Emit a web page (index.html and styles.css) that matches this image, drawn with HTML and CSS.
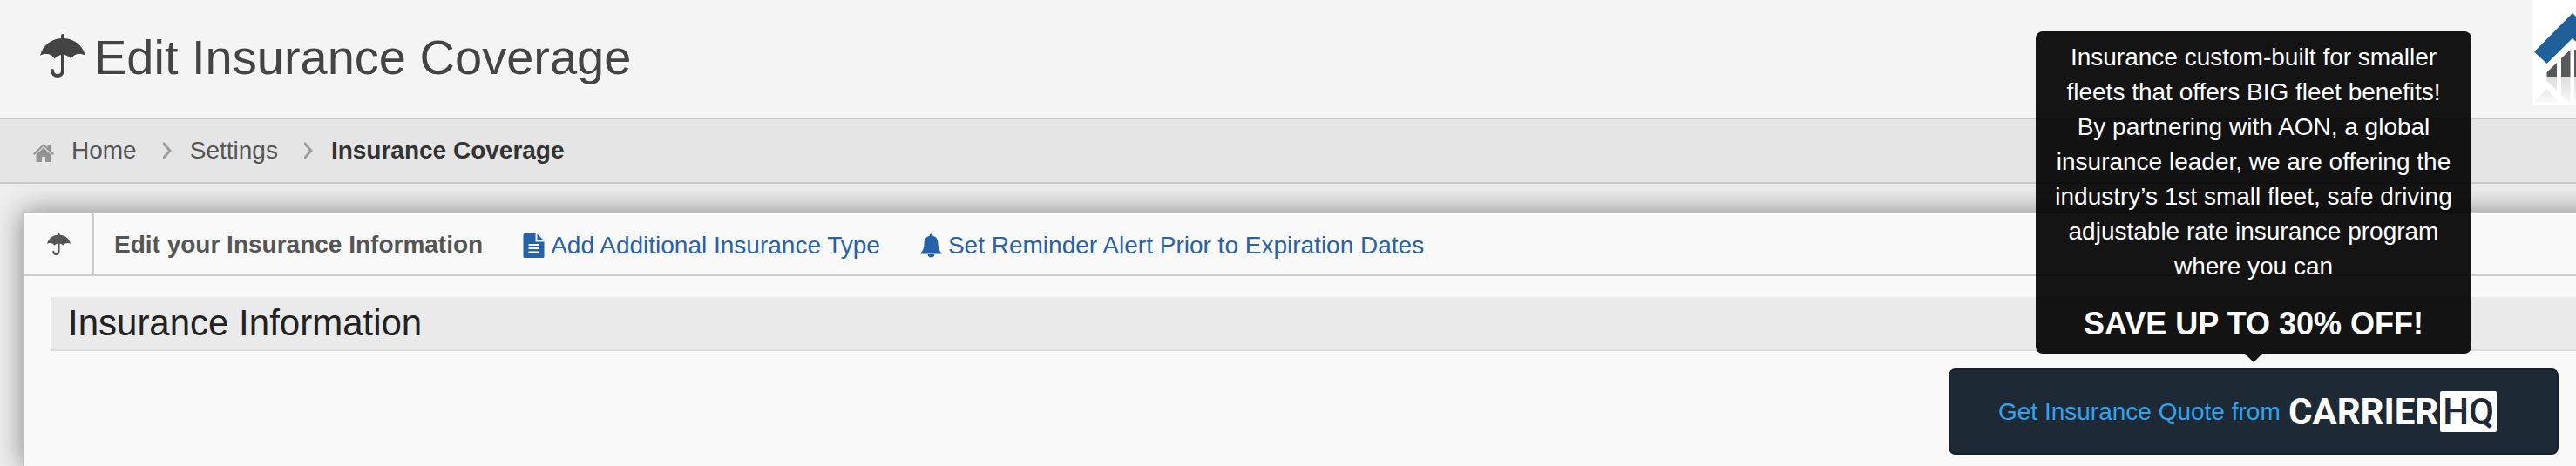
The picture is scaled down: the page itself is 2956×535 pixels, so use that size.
FILE: index.html
```html
<!DOCTYPE html>
<html lang="en">
  <head>
    <title>Edit Insurance Coverage</title>
    <meta charset="utf-8">
    <link rel="stylesheet" href="styles.css">
  </head>
  <body>

  <svg class="sprite" aria-hidden="true">
    <symbol id="umbrella" viewBox="0 0 52 50">
      <path d="M24 7V2a2 2 0 0 1 4 0v5z"/>
      <path d="M0 25C3 12 14 5 26 5s23 7 26 20c-2-1.500-4.500-2-7-2-4 0-7.500 2-9.800 5.500C33 25.500 30 24 26 24s-7 1.500-9.200 4.500C14.500 25 11 23 7 23c-2.500 0-5 .500-7 2z"/>
      <path d="M26 24v18c0 8-12 8-12 0" fill="none" stroke="currentColor" stroke-width="4" stroke-linecap="round"/>
    </symbol>
  </svg>

  <div id="content-header">
    <h1><svg class="icon-title" viewBox="0 0 52 50"><use href="#umbrella"/></svg>Edit Insurance Coverage</h1>
    <svg class="logo" viewBox="0 0 50 120" role="img" aria-label="Company logo">
      <defs>
        <linearGradient id="fade" x1="0" y1="0" x2="0" y2="1">
          <stop offset="0" stop-color="#dcdcdc"/>
          <stop offset="1" stop-color="#fbfbfb"/>
        </linearGradient>
      </defs>
      <rect width="50" height="120" fill="#fff"/>
      <path fill="#1f6099" d="M2 59.500L46 15l4 4v29l-4-4-29.500 29z"/>
      <path fill="#58585a" d="M16.500 83L28 72v16H16.500zM33 67l10.500-10v31H33zM48 57h2v31h-2z"/>
      <path fill="url(#fade)" d="M16.500 88H28v16l-11.500-11zM33 88h10.500v32L33 109zM48 88h2v32h-2zM2 117l14.500-15L31 118z"/>
    </svg>
  </div>

  <div id="breadcrumb">
    <a href="#"><svg class="icon-home" viewBox="0 0 24 21"><path d="M12 0l4.500 4.300V1H20v6.600l4 3.800-1.400 1.500L12 2.800 1.400 12.900 0 11.400z"/><path d="M12 4.600l8.500 8V21H14v-6h-4v6H3.500v-8.400z"/></svg>Home</a>
    <svg class="arrow" viewBox="0 0 10 20"><path d="M0 1l8 9-8 9"/></svg>
    <a href="#">Settings</a>
    <svg class="arrow" viewBox="0 0 10 20"><path d="M0 1l8 9-8 9"/></svg>
    <a href="#" class="current">Insurance Coverage</a>
  </div>

  <div id="content">
    <div class="widget-box">
      <div class="widget-title">
        <span class="icon"><svg class="icon-small" viewBox="0 0 52 50"><use href="#umbrella"/></svg></span>
        <h5>Edit your Insurance Information</h5>
        <a href="#"><svg class="icon-link" viewBox="0 0 24 28"><path fill-rule="evenodd" d="M2 0h12v9.500h10V26.500a1.500 1.500 0 0 1-1.500 1.500h-21A1.500 1.500 0 0 1 0 26.500v-25A1.500 1.500 0 0 1 1.500 0zM6 12v2h12v-2zM6 16v2h12v-2zM6 20.500v2h12v-2z"/><path d="M16 .500L23.500 8H16z"/></svg>Add Additional Insurance Type</a>
        <a href="#"><svg class="icon-link" viewBox="0 0 26 28"><path d="M13 0c1.200 0 2 .800 2 2.200 4 .800 6 4 6.200 8 .300 6.500 1.300 9.800 4.800 13.800H0c3.500-4 4.500-7.300 4.800-13.800.200-4 2.200-7.200 6.200-8C11 .800 11.800 0 13 0z"/><path d="M9 24.500h8a4 3.500 0 0 1-8 0z"/></svg>Set Reminder Alert Prior to Expiration Dates</a>
      </div>
      <div class="widget-content">
        <h3>Insurance Information</h3>
        <div class="quote">
          <a href="#" class="btn-quote">
            <span>Get Insurance Quote from</span>
            <span class="carrier">CARRIER<b>HQ</b></span>
          </a>
          <div class="tooltip" role="tooltip">
            Insurance custom-built for smaller fleets that offers BIG fleet benefits! By partnering with AON, a global insurance leader, we are offering the industry’s 1st small fleet, safe driving adjustable rate insurance program where you can
            <strong>SAVE UP TO 30% OFF!</strong>
          </div>
        </div>
      </div>
    </div>
  </div>

  </body>
</html>
```
FILE: styles.css
```css
* {
  box-sizing: border-box;
}
body {
  margin: 0;
  min-height: 100vh;
  display: flex;
  flex-direction: column;
  overflow-x: hidden;
  background: #eee;
  color: #555;
  font: 28px/40px "Liberation Sans", Arial, sans-serif;
}
h1, h3, h5 {
  margin: 0;
}
a {
  color: #2762a9;
  text-decoration: none;
}
svg {
  fill: currentColor;
  flex: none;
}
.sprite {
  position: absolute;
  width: 0;
  height: 0;
}

#content-header {
  display: flex;
  justify-content: space-between;
  align-items: flex-start;
  background: #f4f4f4;
  border-bottom: 2px solid #c9c9c9;
}
#content-header h1 {
  display: flex;
  align-items: center;
  gap: 10px;
  padding: 36px 0 39px 46px;
  color: #444;
  font-size: 56px;
  font-weight: normal;
  line-height: 60px;
  text-shadow: 0 2px 0 #fff;
}
.icon-title {
  width: 52px;
  height: 50px;
  margin-bottom: 4px;
  filter: drop-shadow(0 2px 0 #fff);
}
.logo {
  width: 50px;
  height: 120px;
}

#breadcrumb {
  display: flex;
  align-items: center;
  padding: 16px 38px;
  background: #e5e5e5;
  border-bottom: 2px solid #c9c9c9;
}
#breadcrumb a {
  display: flex;
  align-items: center;
  color: #555;
}
#breadcrumb .current {
  color: #333;
  font-weight: bold;
}
.icon-home {
  width: 24px;
  height: 21px;
  margin: 4px 20px 0 0;
  color: #939393;
}
.arrow {
  width: 10px;
  height: 20px;
  margin: 0 21px 0 30px;
  fill: none;
  stroke: #9c9c9c;
  stroke-width: 3;
}

#content {
  flex: 1;
  display: flex;
  padding: 32px 0 0 26px;
}
/* runs past the right edge so the shadow shows only along the top and left */
.widget-box {
  flex: 1;
  margin-right: -40px;
  padding-right: 40px;
  background: #f9f9f9;
  border: 2px solid #bfbfbf;
  border-width: 2px 0 0 2px;
  box-shadow: 0 0 30px rgba(0,0,0,0.45);
}
.widget-title {
  display: flex;
  align-items: center;
  height: 72px;
  margin-right: -40px;
  border-bottom: 2px solid #cdcdcd;
  box-shadow: inset 0 2px 0 #fff;
}
.widget-title .icon {
  display: flex;
  align-self: stretch;
  align-items: center;
  justify-content: center;
  width: 80px;
  border-right: 2px solid #cdcdcd;
}
.icon-small {
  width: 27px;
  height: 26px;
}
.widget-title h5 {
  padding: 2px 0 0 23px;
  font-size: 28px;
}
.widget-title a {
  display: flex;
  align-items: center;
  gap: 7px;
  margin-left: 46px;
  padding-top: 3px;
}
.icon-link {
  width: 25px;
  height: 28px;
}

.widget-content {
  padding: 24px 0 0 30px;
}
.widget-content h3 {
  padding: 10px 20px;
  background: #eaeaea;
  border-bottom: 2px solid #dcdcdc;
  color: #222;
  font-size: 42px;
  font-weight: normal;
}

.quote {
  position: relative;
  width: 700px;
  margin: 20px 20px 12px auto;
}
.btn-quote {
  display: flex;
  align-items: center;
  justify-content: space-between;
  padding: 24px 69px 24px 55px;
  background: #1d2935;
  border: 2px solid #16202a;
  border-radius: 8px;
  color: #2fa4ee;
}
.carrier {
  display: flex;
  align-items: center;
  gap: 2px;
  color: #fff;
  font: bold 42px/47px Roboto, sans-serif;
}
.carrier b {
  padding: 0 3px;
  background: #fff;
  border-radius: 2px;
  color: #1d2935;
  font-weight: 500;
}

.tooltip {
  position: absolute;
  bottom: calc(100% + 17px);
  left: calc(50% - 250px);
  width: 500px;
  padding: 10px 16px 12px;
  background: rgba(0,0,0,0.92);
  border-radius: 8px;
  color: #fff;
  text-align: center;
}
.tooltip strong {
  display: block;
  margin-top: 24px;
  font-size: 36px;
  line-height: 44px;
}
.tooltip:after {
  content: "";
  position: absolute;
  top: 100%;
  left: calc(50% - 10px);
  border: 10px solid transparent;
  border-top-color: rgba(0,0,0,0.92);
  border-bottom: 0;
}
```
